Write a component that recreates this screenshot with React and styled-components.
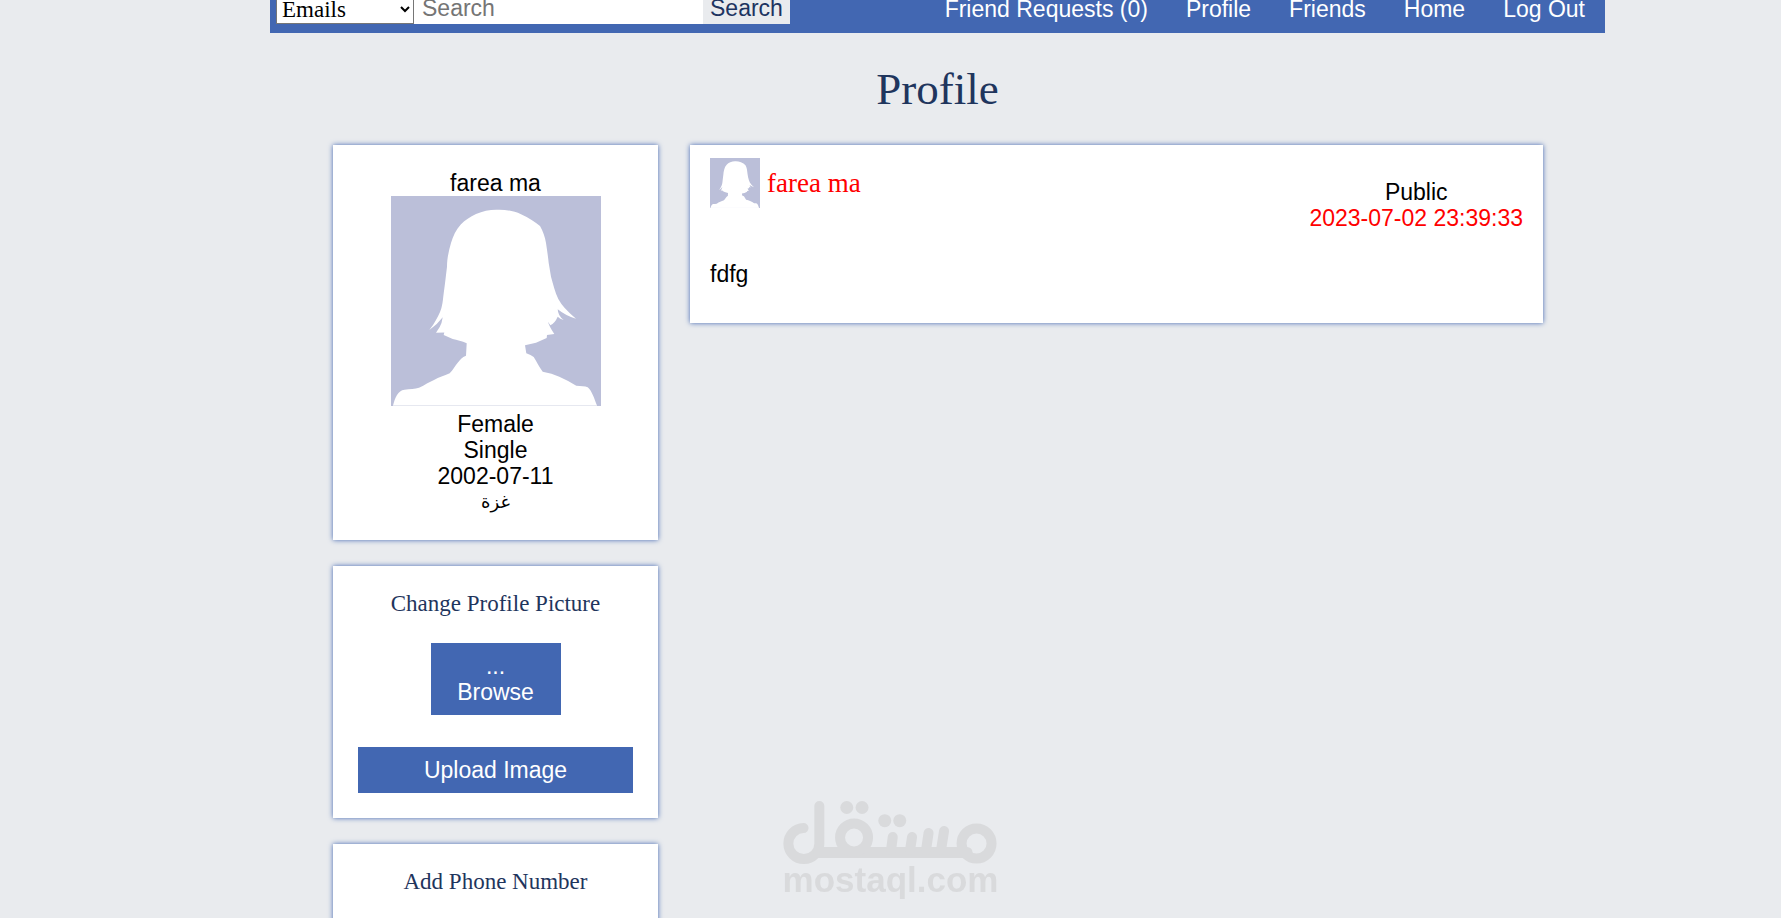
import React from 'react'
import styled, { createGlobalStyle } from 'styled-components';

const navLinks = ['Friend Requests (0)', 'Profile', 'Friends', 'Home', 'Log Out'];

const user = {
  name: 'farea ma',
  gender: 'Female',
  status: 'Single',
  birthday: '2002-07-11',
  city: 'غزة',
};

const posts = [
  { id: 1, author: 'farea ma', privacy: 'Public', time: '2023-07-02 23:39:33', text: 'fdfg' },
];

const Avatar = ({ size }) => (
  <Picture $size={size} viewBox='0 0 210 210' role='img' aria-label='Profile picture'>
    <rect width='210' height='210' fill='#bbbfd9' />
    <path
      fill='#fff'
      d='M2 209.5 C3 206 4 202 6 199 C8 196 10 194 13.5 193.7 C19 193 24 193 28 191.7 C34 189 38 186 43 184
        C48 181 53 180 58.7 177.3 C62 174 64 170 66.7 166.7 C69 164 71 161 75 159.7 L75.7 147.3
        C71 145 66 144 61.7 143 L52.7 139 L53.3 136.5 L45 136.7 L48.7 131 Q51 127 51.7 121.3
        Q46 129 38.3 134 Q43 128 45 124 Q50 115 50.7 110.7 C52 106 52 102 52.7 97.3
        C54 88 55 79 56 70.7 C56 62 58 54 60 47 C62 40 65 34 70 28.3 C74 24 79 21 85 18
        C92 15 99 13.5 106.7 13.7 C115 13.5 123 15 130 18.3 C138 22 144 26 149 30
        C152 35 154 41 155 47 C156 54 157 60 157.7 67 L160 80.7 C162 88 164 96 167.3 103
        Q172 112 185 122.7 Q175 120 166.7 113.3 Q167 120 172.7 124 Q169 123 166.7 120.7
        Q164 127 159.3 129.3 L157 125.7 Q158 130 163.3 138 L156 139 L155.7 142
        L145 146.7 L134 149.3 L135.3 157.3 Q140 159 142.7 161 C146 166 148 171 151.7 175.7
        Q161 177 168.3 180.7 Q178 185 185.3 189.7 C190 190 194 190 196.7 191.3
        C201 195 203 202 206 209.5 Z'
    />
    <path d='M2 209.5 H206' stroke='#e6e8f0' />
  </Picture>
);

const Watermark = () => (
  <Brand>
    <BrandMark viewBox='0 0 214 63' aria-hidden='true'>
      <g fill='none' stroke='currentColor' strokeWidth='10' strokeLinecap='round'>
        <path d='M36.3 5 V42.5 A15.5 15.5 0 1 1 20.5 27' />
        <path d='M36 51.5 H184' strokeWidth='11' />
        <circle cx='71' cy='36.5' r='14' />
        <circle cx='193.5' cy='42.5' r='15' />
        <path d='M109.7 36 L108 49 M129 36 L127 49 M145.5 32 L143 49 M161 30 L158 49' />
      </g>
      <g fill='currentColor'>
        <circle cx='63.7' cy='6.5' r='6.5' />
        <circle cx='79' cy='6.5' r='6.5' />
        <circle cx='101.7' cy='19.7' r='6.5' />
        <circle cx='116.7' cy='19.7' r='6.5' />
      </g>
    </BrandMark>
    <BrandName>mostaql.com</BrandName>
  </Brand>
);

export default function App() {
  return (
    <Page>
      <GlobalStyle />
      <TopBar>
        <SearchForm onSubmit={(e) => e.preventDefault()}>
          <SearchType aria-label='Search by'>
            <option>Emails</option>
          </SearchType>
          <SearchInput type='text' placeholder='Search' aria-label='Search' />
          <SearchButton type='submit'>Search</SearchButton>
        </SearchForm>
        <Nav>
          {navLinks.map((link) => <NavLink key={link} href='#'>{link}</NavLink>)}
        </Nav>
      </TopBar>
      <Title>Profile</Title>
      <Columns>
        <Sidebar>
          <Card>
            <div>{user.name}</div>
            <Avatar size={210} />
            <div>{user.gender}</div>
            <div>{user.status}</div>
            <div>{user.birthday}</div>
            <City lang='ar'>{user.city}</City>
          </Card>
          <Card as='form' onSubmit={(e) => e.preventDefault()}>
            <CardTitle>Change Profile Picture</CardTitle>
            <FileLabel>
              <span>...</span>
              <span>Browse</span>
              <FileInput type='file' />
            </FileLabel>
            <UploadButton type='submit'>Upload Image</UploadButton>
          </Card>
          <Card $minHeight='200px'>
            <CardTitle>Add Phone Number</CardTitle>
          </Card>
        </Sidebar>
        <Feed>
          {posts.map((post) => (
            <Post key={post.id}>
              <PostHeader>
                <Author>
                  <Avatar size={50} />
                  <AuthorLink href='#'>{post.author}</AuthorLink>
                </Author>
                <PostInfo>
                  <div>{post.privacy}</div>
                  <PostTime>{post.time}</PostTime>
                </PostInfo>
              </PostHeader>
              <PostText>{post.text}</PostText>
            </Post>
          ))}
        </Feed>
      </Columns>
      <Watermark />
    </Page>
  )
}

const GlobalStyle = createGlobalStyle`
  * {
    box-sizing: border-box;
  }
  body {
    margin: 0;
    background-color: #e9ebee;
    color: #000;
    font-family: 'Liberation Sans', Arial, sans-serif;
    font-size: 23px;
    line-height: 26px;
  }
`;

const Page = styled.div`
  height: 100vh;
  overflow: hidden;
  padding: 0 176px 0 270px;
`;

const TopBar = styled.header`
  display: flex;
  justify-content: space-between;
  align-items: flex-end;
  height: 33px;
  padding: 0 20px 9px 6px;
  background-color: #4267b2;
`;

const SearchForm = styled.form`
  display: flex;
  align-items: flex-end;
`;

const SearchType = styled.select`
  width: 138px;
  height: 30px;
  padding: 0 0 0 1px;
  border: 1px solid #767676;
  border-radius: 0;
  background-color: #fff;
  color: #000;
  font-family: 'Liberation Serif', 'Times New Roman', serif;
  font-size: 23px;
`;

const SearchInput = styled.input`
  width: 289px;
  height: 32px;
  padding: 0 8px;
  border: none;
  background-color: #fff;
  font-family: inherit;
  font-size: 23px;
  &::placeholder {
    color: #757575;
  }
`;

const SearchButton = styled.button`
  height: 32px;
  padding: 0 7px;
  border: none;
  background-color: #e9ebee;
  color: #1d3461;
  font-family: inherit;
  font-size: 23px;
  cursor: pointer;
`;

const Nav = styled.nav`
  display: flex;
  gap: 38px;
  padding-bottom: 2px;
`;

const NavLink = styled.a`
  color: #fff;
  text-decoration: none;
  white-space: nowrap;
`;

const Title = styled.h1`
  margin: 30px 0;
  color: #1f355d;
  font-family: 'Liberation Serif', 'Times New Roman', serif;
  font-size: 45px;
  font-weight: normal;
  line-height: 52px;
  text-align: center;
`;

const Columns = styled.main`
  display: flex;
  align-items: flex-start;
  gap: 32px;
  padding: 0 62px 0 63px;
`;

const Sidebar = styled.aside`
  display: flex;
  flex-direction: column;
  flex: none;
  gap: 26px;
  width: 325px;
`;

const Card = styled.section`
  display: flex;
  flex-direction: column;
  align-items: center;
  min-height: ${({ $minHeight }) => $minHeight || 'auto'};
  padding: 25px;
  background-color: #fff;
  box-shadow: 0 0 5px #4267b2;
  text-align: center;
`;

const CardTitle = styled.h2`
  margin: 0 0 26px;
  color: #1f355d;
  font-family: 'Liberation Serif', 'Times New Roman', serif;
  font-size: 23px;
  font-weight: normal;
`;

const Picture = styled.svg`
  display: block;
  flex: none;
  width: ${({ $size }) => $size}px;
  height: ${({ $size }) => $size}px;
  ${Card} & {
    margin-bottom: 5px;
  }
`;

const City = styled.div`
  font-family: 'Liberation Serif', 'Times New Roman', 'DejaVu Sans', serif;
  font-size: 18px;
`;

const FileLabel = styled.label`
  display: flex;
  flex-direction: column;
  width: 130px;
  margin-bottom: 32px;
  padding: 10px;
  background-color: #4267b2;
  color: #fff;
  cursor: pointer;
`;

const FileInput = styled.input`
  display: none;
`;

const UploadButton = styled.button`
  width: 100%;
  padding: 10px;
  border: none;
  background-color: #4267b2;
  color: #fff;
  font-family: inherit;
  font-size: 23px;
  line-height: 26px;
  cursor: pointer;
`;

const Feed = styled.section`
  flex: 1;
`;

const Post = styled.article`
  padding: 13px 20px 36px;
  background-color: #fff;
  box-shadow: 0 0 5px #4267b2;
`;

const PostHeader = styled.div`
  display: flex;
  justify-content: space-between;
  align-items: flex-start;
`;

const Author = styled.div`
  display: flex;
  align-items: center;
  gap: 7px;
`;

const AuthorLink = styled.a`
  color: #f00;
  font-family: 'Liberation Serif', 'Times New Roman', serif;
  font-size: 27px;
  text-decoration: none;
`;

const PostInfo = styled.div`
  padding-top: 21px;
  text-align: center;
`;

const PostTime = styled.time`
  color: #f00;
`;

const PostText = styled.p`
  margin: 30px 0 0;
`;

const Brand = styled.div`
  position: fixed;
  bottom: 22px;
  left: 50%;
  display: flex;
  flex-direction: column;
  align-items: center;
  transform: translateX(-50%);
  color: #d9dadc;
  pointer-events: none;
`;

const BrandMark = styled.svg`
  width: 214px;
  height: 63px;
`;

const BrandName = styled.span`
  font-size: 35px;
  font-weight: bold;
  line-height: 32px;
`;
